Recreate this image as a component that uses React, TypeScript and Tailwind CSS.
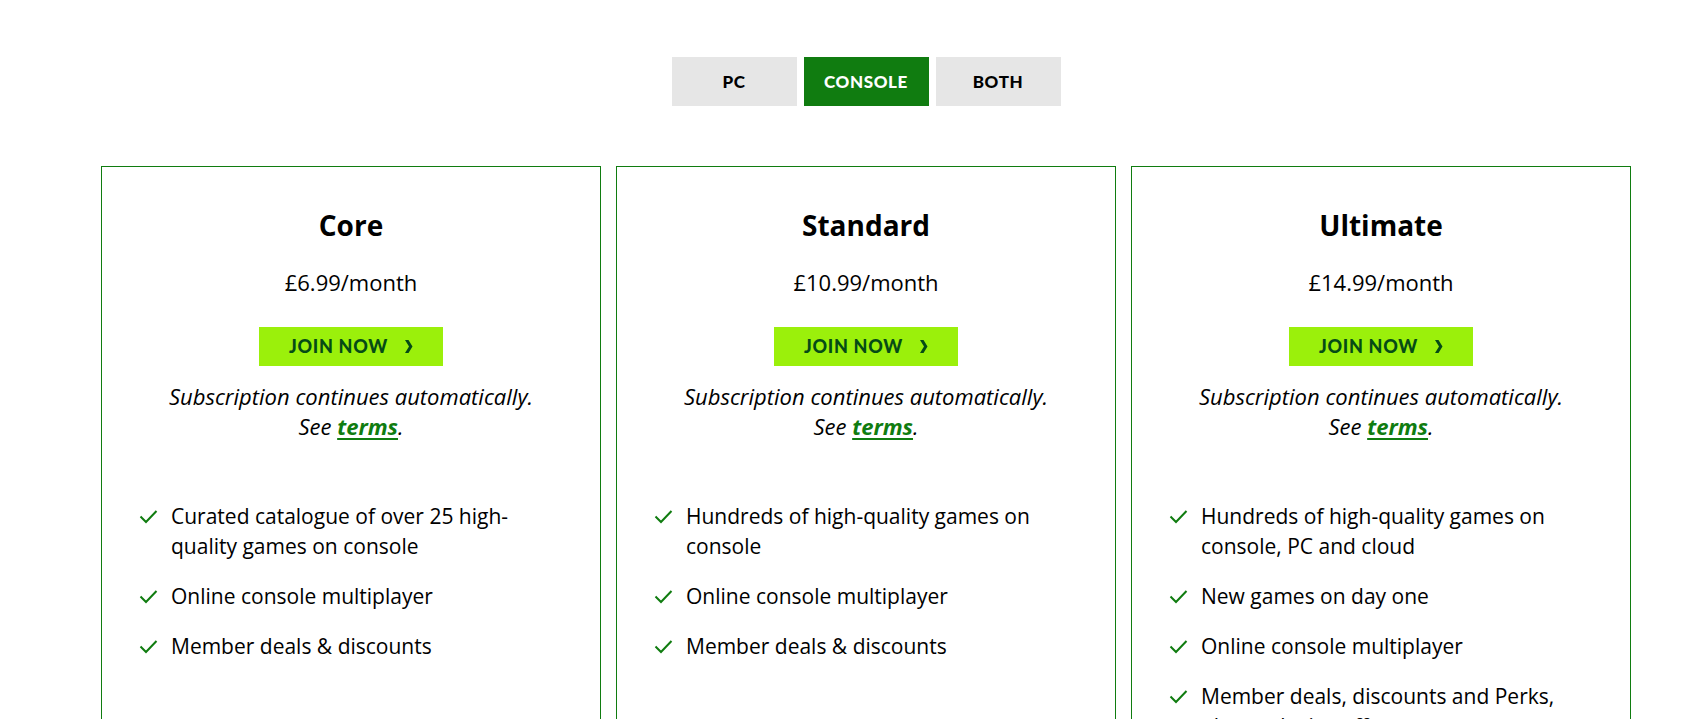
import React from 'react';

interface Plan {
  name: string;
  price: string;
  perks: string[];
}

const plans: Plan[] = [
  {
    name: 'Core',
    price: '£6.99/month',
    perks: [
      'Curated catalogue of over 25 high-quality games on console',
      'Online console multiplayer',
      'Member deals & discounts',
    ],
  },
  {
    name: 'Standard',
    price: '£10.99/month',
    perks: [
      'Hundreds of high-quality games on console',
      'Online console multiplayer',
      'Member deals & discounts',
    ],
  },
  {
    name: 'Ultimate',
    price: '£14.99/month',
    perks: [
      'Hundreds of high-quality games on console, PC and cloud',
      'New games on day one',
      'Online console multiplayer',
      'Member deals, discounts and Perks, plus exclusive offers',
      'EA Play membership',
    ],
  },
];

const tabs = ['PC', 'CONSOLE', 'BOTH'];

const Check = () => (
  <svg width="19" height="15" viewBox="0 0 19 15" className="shrink-0 mt-[8px]" fill="none">
    <path d="M1.5 7.5 L7 13 L17.5 2" stroke="#107C10" strokeWidth="2" />
  </svg>
);

const PlanCard: React.FC<{ plan: Plan }> = ({ plan }) => (
  <div className="border border-[#107C10] bg-white pt-[40px] pb-10 flex flex-col items-center text-black">
    <h3 className="text-[28px] leading-[36px] font-bold">{plan.name}</h3>
    <p className="mt-[24px] text-[22px] leading-[30px]">{plan.price}</p>
    <button className="mt-[30px] w-[184px] h-[39px] bg-[#9BF00B] text-[#054B16] font-['Lato',sans-serif] font-black text-[18px] tracking-[0.7px] flex items-center justify-center gap-[16px]">
      <span>JOIN NOW</span>
      <svg width="9" height="13" viewBox="0 0 9 13">
        <path d="M1 0 H4.5 L8.5 6.5 L4.5 13 H1 L5 6.5 Z" fill="#054B16" />
      </svg>
    </button>
    <p className="mt-[15px] text-[22px] leading-[30px] italic text-center">
      Subscription continues automatically.
      <br />
      See{' '}
      <a href="#" className="font-bold text-[#107C10] underline underline-offset-[3px] decoration-2">
        terms
      </a>
      .
    </p>
    <ul className="self-stretch mt-[60px] pl-[37px] pr-[30px] flex flex-col gap-[20px]">
      {plan.perks.map((perk) => (
        <li key={perk} className="flex items-start gap-[13px] text-[21px] leading-[30px]">
          <Check />
          <span className="max-w-[380px]">{perk}</span>
        </li>
      ))}
    </ul>
  </div>
);

export default function App() {
  return (
    <div className="min-h-screen bg-white font-['Open_Sans',sans-serif] pt-[57px] pl-[101px]">
      <div className="w-[1530px]">
        <div className="flex justify-center gap-[7px]">
          {tabs.map((t) => (
            <button
              key={t}
              className={`w-[125px] h-[49px] font-['Lato',sans-serif] font-black text-[17px] tracking-[0.6px] ${
                t === 'CONSOLE' ? 'bg-[#107C10] text-white' : 'bg-[#E6E6E6] text-black'
              }`}
            >
              {t}
            </button>
          ))}
        </div>
        <div className="mt-[60px] grid grid-cols-3 gap-[15px]">
          {plans.map((p) => (
            <PlanCard key={p.name} plan={p} />
          ))}
        </div>
      </div>
    </div>
  );
}
